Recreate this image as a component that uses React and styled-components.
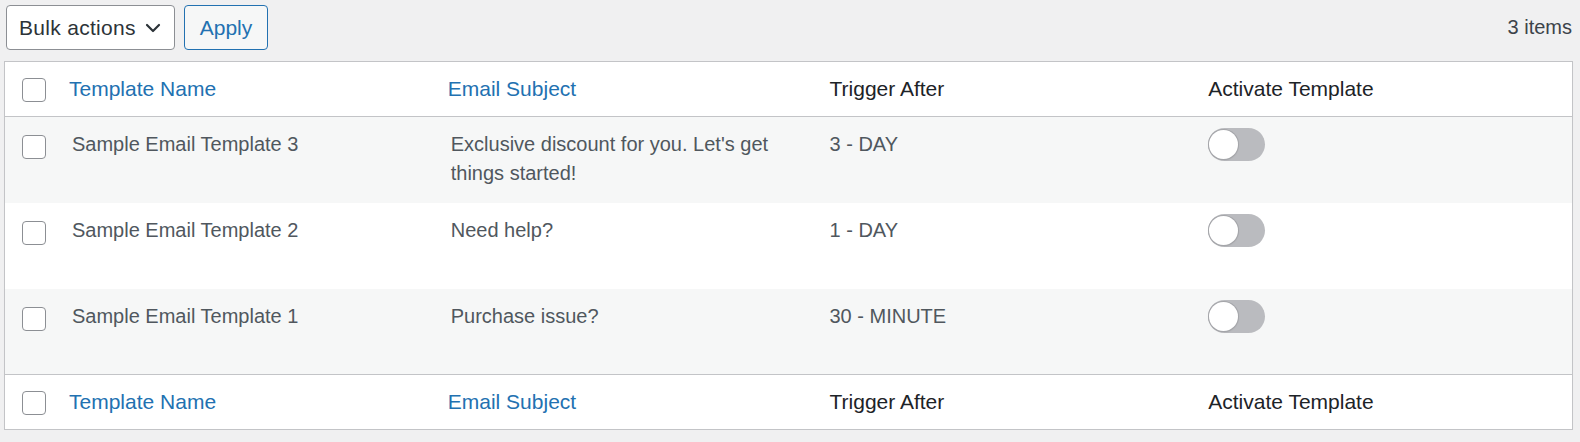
import React from "react";
import styled, { createGlobalStyle } from "styled-components";

const Global = createGlobalStyle`
  html, body { margin: 0; padding: 0; background: #f0f0f1; }
  body { font-family: "Liberation Sans", Arial, sans-serif; color: #3c434a; }
  * { box-sizing: border-box; }
`;

const Page = styled.div`
  padding: 5px 7px 0 4px;
`;

const Toolbar = styled.div`
  display: flex;
  align-items: center;
  height: 45px;
  margin-bottom: 11px;
`;

const Select = styled.div`
  margin-left: 2px;
  width: 169px;
  height: 45px;
  display: flex;
  align-items: center;
  justify-content: space-between;
  padding: 0 13px 0 12px;
  background: #fff;
  border: 1px solid #8c8f94;
  border-radius: 4px;
  font-size: 21px;
  letter-spacing: 0.3px;
  color: #2c3338;
`;

const ApplyButton = styled.button`
  margin-left: 9px;
  width: 84px;
  height: 45px;
  background: #f6f7f7;
  border: 1px solid #2271b1;
  border-radius: 4px;
  color: #2271b1;
  font-family: inherit;
  font-size: 21px;
  padding: 0;
`;

const Count = styled.div`
  margin-left: auto;
  margin-right: 1px;
  font-size: 20px;
  color: #3c434a;
`;

const Table = styled.div`
  background: #fff;
  border: 1px solid #c3c4c7;
  box-shadow: 0 1px 1px rgba(0, 0, 0, 0.04);
`;

const Row = styled.div`
  display: grid;
  grid-template-columns: 52px repeat(4, 1fr);
  align-items: ${(p) => (p.$head ? "center" : "start")};
  height: ${(p) => (p.$head ? "55px" : p.$short ? "85px" : "86px")};
  background: ${(p) => (p.$striped ? "#f6f7f7" : "#fff")};
  ${(p) => p.$top && "border-bottom: 1px solid #c3c4c7;"}
  ${(p) => p.$bottom && "border-top: 1px solid #c3c4c7;"}
`;

const CheckCell = styled.div`
  padding-left: 17px;
  padding-top: ${(p) => (p.$head ? "2px" : "18px")};
  display: flex;
`;

const Checkbox = styled.span`
  display: block;
  width: 24px;
  height: 24px;
  border: 1px solid #8c8f94;
  border-radius: 4px;
  background: #fff;
`;

const HeadCell = styled.div`
  padding-left: ${(p) => (p.$link ? "12px" : "15px")};
  padding-bottom: 1px;
  font-size: 21px;
  line-height: 29px;
  color: ${(p) => (p.$link ? "#2271b1" : "#1d2327")};
`;

const Cell = styled.div`
  padding: 13px 15px 0 15px;
  font-size: 20px;
  line-height: 29px;
  color: #50575e;
`;

const ToggleCell = styled.div`
  padding: 11px 15px 0 15px;
`;

const Track = styled.span`
  position: relative;
  display: block;
  width: 57px;
  height: 33px;
  border-radius: 17px;
  background: #babbbf;
`;

const Knob = styled.span`
  position: absolute;
  left: 1px;
  top: 2px;
  width: 29px;
  height: 29px;
  border-radius: 50%;
  background: #fff;
  box-shadow: 0 0 0 1px #a4a5a9, 0 1px 2px rgba(0, 0, 0, 0.15);
`;

const Chevron = () => (
  <svg width="16" height="10" viewBox="0 0 16 10" fill="none">
    <path d="M2 2l6 6 6-6" stroke="#2c3338" strokeWidth="2.2" strokeLinecap="round" strokeLinejoin="round" />
  </svg>
);

const rows = [
  { name: "Sample Email Template 3", subject: "Exclusive discount for you. Let's get things started!", trigger: "3 - DAY" },
  { name: "Sample Email Template 2", subject: "Need help?", trigger: "1 - DAY" },
  { name: "Sample Email Template 1", subject: "Purchase issue?", trigger: "30 - MINUTE" },
];

const HeaderRow = (props) => (
  <Row $head {...props}>
    <CheckCell $head><Checkbox /></CheckCell>
    <HeadCell $link>Template Name</HeadCell>
    <HeadCell $link>Email Subject</HeadCell>
    <HeadCell>Trigger After</HeadCell>
    <HeadCell>Activate Template</HeadCell>
  </Row>
);

export default function App() {
  return (
    <Page>
      <Global />
      <Toolbar>
        <Select>
          <span>Bulk actions</span>
          <Chevron />
        </Select>
        <ApplyButton>Apply</ApplyButton>
        <Count>3 items</Count>
      </Toolbar>
      <Table>
        <HeaderRow $top />
        {rows.map((r, i) => (
          <Row key={r.name} $striped={i % 2 === 0} $short={i === rows.length - 1}>
            <CheckCell><Checkbox /></CheckCell>
            <Cell>{r.name}</Cell>
            <Cell>{r.subject}</Cell>
            <Cell>{r.trigger}</Cell>
            <ToggleCell>
              <Track><Knob /></Track>
            </ToggleCell>
          </Row>
        ))}
        <HeaderRow $bottom />
      </Table>
    </Page>
  );
}
